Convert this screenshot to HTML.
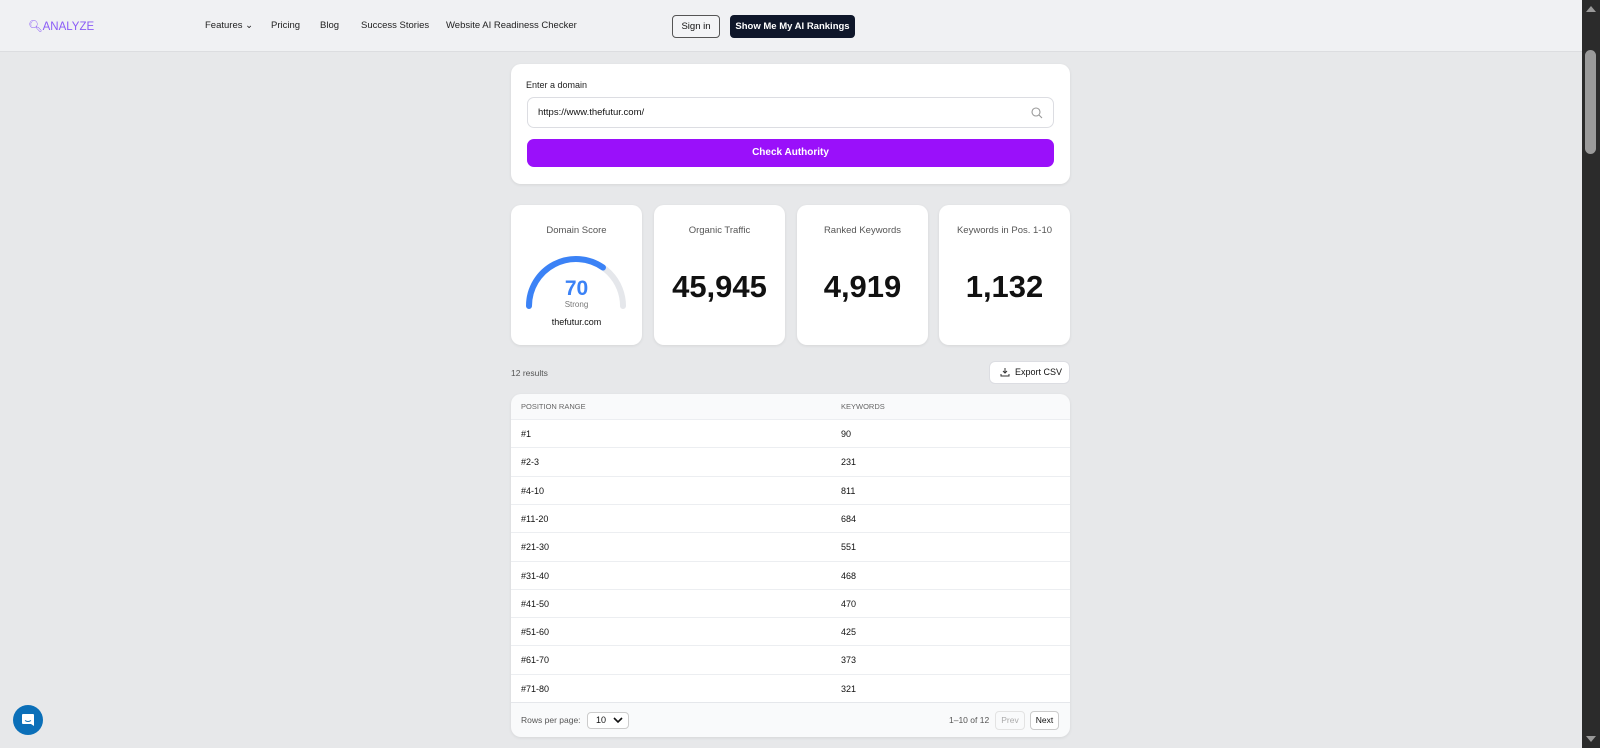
<!DOCTYPE html>
<html><head><meta charset="utf-8"><style>
*{box-sizing:border-box;margin:0;padding:0}
body{width:1600px;height:748px;overflow:hidden;background:#e7e8ea;font-family:"Liberation Sans",Arial,sans-serif;color:#111;position:relative}
.nav{position:absolute;left:0;top:0;width:1582px;height:52px;background:#f0f1f3;border-bottom:1px solid #dcdde0}
.logo{position:absolute;left:28px;top:19px;font-size:11.5px;color:#8b5cf6}
.nl{position:absolute;top:20px;font-size:9.5px;color:#222}
.btn1{position:absolute;left:672px;top:15px;width:48px;height:23px;border:1px solid #555;border-radius:4px;font-size:9.5px;text-align:center;line-height:21px;background:#f3f4f6}
.btn2{position:absolute;left:730px;top:15px;width:125px;height:23px;background:#0f172a;border-radius:4px;color:#fff;font-size:9.5px;font-weight:bold;text-align:center;line-height:23px}
.sb{position:absolute;left:1582px;top:0;width:18px;height:748px;background:#2b2b2b}
.thumb{position:absolute;left:1585px;top:50px;width:11px;height:104px;background:#9a9a9a;border-radius:6px}
.card{position:absolute;background:#fff;border-radius:10px;box-shadow:0 1px 3px rgba(0,0,0,.08)}
.st{font-size:9.5px;color:#555;text-align:center;position:absolute;left:0;right:0;top:20px}
.big{font-size:31px;font-weight:bold;text-align:center;position:absolute;left:0;right:0;top:64px;color:#111}
.row{position:absolute;left:0;right:0;height:28.3px;border-top:1px solid #eceef1;font-size:9px;line-height:28px}
.row span{position:absolute}
</style></head><body>
<div class="nav">
<div class="logo">&#x1F50D;&#xFE0E;ANALYZE</div>
<div class="nl" style="left:205px">Features ⌄</div>
<div class="nl" style="left:271px">Pricing</div>
<div class="nl" style="left:320px">Blog</div>
<div class="nl" style="left:361px">Success Stories</div>
<div class="nl" style="left:446px">Website AI Readiness Checker</div>
<div class="btn1">Sign in</div>
<div class="btn2">Show Me My AI Rankings</div>
</div>
<div class="sb"></div><div class="thumb"></div>
<div style="position:absolute;left:1586px;top:6px;width:0;height:0;border-left:5px solid transparent;border-right:5px solid transparent;border-bottom:6px solid #999"></div>
<div style="position:absolute;left:1586px;top:736px;width:0;height:0;border-left:5px solid transparent;border-right:5px solid transparent;border-top:6px solid #999"></div>

<div class="card" style="left:511px;top:64px;width:559px;height:120px">
<div style="position:absolute;left:15px;top:16px;font-size:9px;color:#222">Enter a domain</div>
<div style="position:absolute;left:16px;top:33px;width:527px;height:31px;border:1px solid #dcdde2;border-radius:7px;font-size:9.5px;line-height:29px;padding-left:10px">https://www.thefutur.com/
<svg style="position:absolute;right:10px;top:9px" width="12" height="12" viewBox="0 0 12 12"><circle cx="5" cy="5" r="4" fill="none" stroke="#999" stroke-width="1.1"/><path d="M8 8l3 3" stroke="#999" stroke-width="1.1"/></svg></div>
<div style="position:absolute;left:16px;top:75px;width:527px;height:28px;background:#9a10fa;border-radius:7px;color:#fff;font-size:10px;font-weight:bold;text-align:center;line-height:28px">Check Authority</div>
</div>

<div class="card" style="left:511px;top:205px;width:131px;height:140px">
<div class="st">Domain Score</div>
<svg style="position:absolute;left:0;top:40px" width="131" height="70" viewBox="0 0 131 70">
<path d="M18 61 A47 47 0 0 1 112 61" fill="none" stroke="#e5e7eb" stroke-width="6" stroke-linecap="round"/>
<path d="M18 61 A47 47 0 0 1 92 22.5" fill="none" stroke="#3b82f6" stroke-width="6" stroke-linecap="round"/>
</svg>
<div style="position:absolute;left:0;right:0;top:72px;text-align:center;font-size:21px;font-weight:bold;color:#3b82f6">70</div>
<div style="position:absolute;left:0;right:0;top:95px;text-align:center;font-size:8px;color:#777">Strong</div>
<div style="position:absolute;left:0;right:0;top:112px;text-align:center;font-size:9px;color:#111">thefutur.com</div>
</div>
<div class="card" style="left:654px;top:205px;width:131px;height:140px"><div class="st">Organic Traffic</div><div class="big">45,945</div></div>
<div class="card" style="left:797px;top:205px;width:131px;height:140px"><div class="st">Ranked Keywords</div><div class="big">4,919</div></div>
<div class="card" style="left:939px;top:205px;width:131px;height:140px"><div class="st">Keywords in Pos. 1-10</div><div class="big">1,132</div></div>

<div style="position:absolute;left:511px;top:368px;font-size:8.5px;color:#555">12 results</div>
<div style="position:absolute;left:989px;top:361px;width:81px;height:23px;background:#fff;border:1px solid #dcdde2;border-radius:6px;font-size:9px;line-height:21px;padding-left:25px">Export CSV
<svg style="position:absolute;left:10px;top:5px" width="10" height="10" viewBox="0 0 10 10"><path d="M5 1v5M3 4l2 2 2-2M1 7v2h8V7" fill="none" stroke="#333" stroke-width="1"/></svg></div>

<div class="card" style="left:511px;top:394px;width:559px;height:343px;overflow:hidden;background:#f9fafb">
<div style="position:absolute;left:0;right:0;top:0;height:25px;font-size:7.5px;color:#666;line-height:25px">
<span style="position:absolute;left:10px">POSITION RANGE</span><span style="position:absolute;left:330px">KEYWORDS</span></div>
<div style="position:absolute;left:0;right:0;top:25px;height:283px;background:#fff">
<div class="row" style="top:0"><span style="left:10px">#1</span><span style="left:330px">90</span></div>
<div class="row" style="top:28.3px"><span style="left:10px">#2-3</span><span style="left:330px">231</span></div>
<div class="row" style="top:56.6px"><span style="left:10px">#4-10</span><span style="left:330px">811</span></div>
<div class="row" style="top:84.9px"><span style="left:10px">#11-20</span><span style="left:330px">684</span></div>
<div class="row" style="top:113.2px"><span style="left:10px">#21-30</span><span style="left:330px">551</span></div>
<div class="row" style="top:141.5px"><span style="left:10px">#31-40</span><span style="left:330px">468</span></div>
<div class="row" style="top:169.8px"><span style="left:10px">#41-50</span><span style="left:330px">470</span></div>
<div class="row" style="top:198.1px"><span style="left:10px">#51-60</span><span style="left:330px">425</span></div>
<div class="row" style="top:226.4px"><span style="left:10px">#61-70</span><span style="left:330px">373</span></div>
<div class="row" style="top:254.7px"><span style="left:10px">#71-80</span><span style="left:330px">321</span></div>
</div>
<div style="position:absolute;left:0;right:0;top:308px;height:35px;border-top:1px solid #e5e7eb;font-size:8.5px;color:#555">
<span style="position:absolute;left:10px;top:12px">Rows per page:</span>
<div style="position:absolute;left:76px;top:9px;width:42px;height:17px;border:1px solid #ccc;border-radius:4px;background:#fff;color:#111;font-size:9px;line-height:15px;padding-left:8px">10
<svg style="position:absolute;right:5px;top:4px" width="10" height="7" viewBox="0 0 10 7"><path d="M1 1l4 4 4-4" fill="none" stroke="#111" stroke-width="1.6"/></svg></div>
<span style="position:absolute;left:438px;top:12px">1–10 of 12</span>
<div style="position:absolute;left:484px;top:8px;width:30px;height:19px;border:1px solid #e3e3e3;border-radius:4px;color:#aaa;text-align:center;line-height:17px">Prev</div>
<div style="position:absolute;left:519px;top:8px;width:29px;height:19px;border:1px solid #ccc;border-radius:4px;background:#fff;color:#111;text-align:center;line-height:17px">Next</div>
</div>
</div>

<div style="position:absolute;left:13px;top:705px;width:30px;height:30px;border-radius:50%;background:#0b6fb8">
<svg style="position:absolute;left:8px;top:8px" width="14" height="14" viewBox="0 0 14 14"><path d="M2 1h10a1 1 0 0 1 1 1v11l-3-2H2a1 1 0 0 1-1-1V2a1 1 0 0 1 1-1z" fill="#fff"/><path d="M4 7.5q3 2 6 0" fill="none" stroke="#0b6fb8" stroke-width="1"/></svg></div>
</body></html>
